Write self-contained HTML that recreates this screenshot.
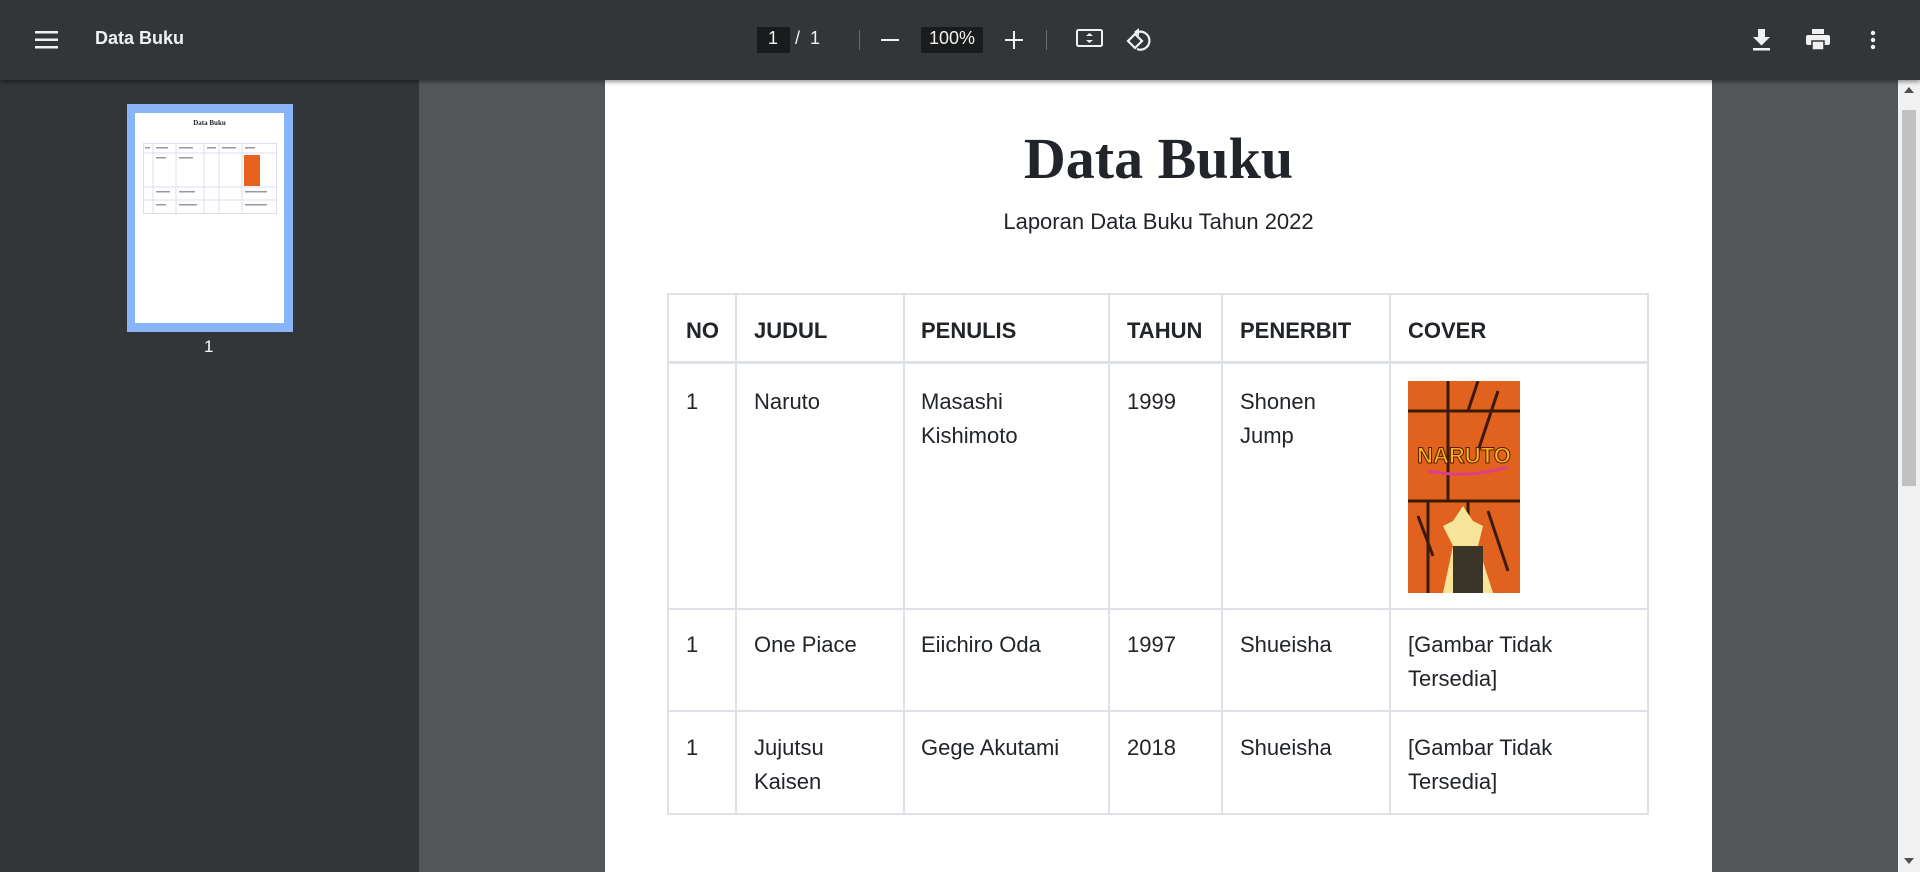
<!DOCTYPE html>
<html><head><meta charset="utf-8"><style>
*{margin:0;padding:0;box-sizing:border-box}
body{width:1920px;height:872px;overflow:hidden;background:#525659;font-family:"Liberation Sans",Arial,sans-serif;position:relative}
.tb{position:absolute;left:0;top:0;width:1920px;height:80px;background:#323639;box-shadow:0 2px 4px rgba(0,0,0,.4);z-index:5;color:#f1f1f1}
.side{position:absolute;left:0;top:80px;width:419px;height:792px;background:#323639}
.a{position:absolute}
.page{position:absolute;left:605px;top:80px;width:1107px;height:792px;background:#fff}
.sb{position:absolute;left:1898px;top:80px;width:22px;height:792px;background:#f1f1f1}
.c{position:absolute;font-size:22px;color:#212529;line-height:34px}
.h{font-weight:bold}
.vl{position:absolute;width:2px;background:#dee2e6}
.hl{position:absolute;height:2px;background:#dee2e6}
</style></head><body>
<div class="tb">
 <svg class="a" style="left:35px;top:30px" width="24" height="20"><rect x="0" y="1" width="23" height="2.5" fill="#f1f1f1"/><rect x="0" y="8.5" width="23" height="2.5" fill="#f1f1f1"/><rect x="0" y="16" width="23" height="2.5" fill="#f1f1f1"/></svg>
 <div class="a" style="left:95px;top:28px;font-size:18px;font-weight:bold">Data Buku</div>
 <div class="a" style="left:757px;top:27px;width:33px;height:26px;background:#191b1c"></div>
 <div class="a" style="left:768px;top:28px;font-size:18px">1</div>
 <div class="a" style="left:795px;top:28px;font-size:18px">/&nbsp;&nbsp;1</div>
 <div class="a" style="left:859px;top:30px;width:1px;height:20px;background:#6a6d70"></div>
 <div class="a" style="left:881px;top:39px;width:18px;height:2px;background:#f1f1f1"></div>
 <div class="a" style="left:921px;top:27px;width:62px;height:26px;background:#191b1c"></div>
 <div class="a" style="left:929px;top:28px;font-size:18px">100%</div>
 <div class="a" style="left:1005px;top:39px;width:18px;height:2px;background:#f1f1f1"></div>
 <div class="a" style="left:1013px;top:31px;width:2px;height:18px;background:#f1f1f1"></div>
 <div class="a" style="left:1046px;top:30px;width:1px;height:20px;background:#6a6d70"></div>
 <svg class="a" style="left:1076px;top:29px" width="28" height="19"><rect x="1" y="1" width="25" height="16" rx="1.5" fill="none" stroke="#f1f1f1" stroke-width="2"/><path d="M10 7l3.5-3 3.5 3zM10 11l3.5 3 3.5-3z" fill="#f1f1f1"/></svg>
 <svg class="a" style="left:1124px;top:26px" width="30" height="28"><path d="M4 15l7-7 7 7-7 7z" fill="none" stroke="#f1f1f1" stroke-width="2.2"/><path d="M14 6a9 9 0 1 1-1 17" fill="none" stroke="#f1f1f1" stroke-width="2.2"/><path d="M10 6l5-4v8z" fill="#f1f1f1"/></svg>
 <svg class="a" style="left:1752px;top:29px" width="20" height="22"><path d="M6 0h7v8h5l-8.5 8.5L1 8h5z" fill="#f1f1f1"/><rect x="1" y="19" width="17" height="2.5" fill="#f1f1f1"/></svg>
 <svg class="a" style="left:1806px;top:29px" width="24" height="22"><rect x="6" y="0" width="12" height="5" fill="#f1f1f1"/><rect x="0" y="6" width="24" height="10" rx="2" fill="#f1f1f1"/><rect x="6" y="12" width="12" height="9" fill="#f1f1f1" stroke="#323639" stroke-width="1.5"/></svg>
 <svg class="a" style="left:1870px;top:30px" width="6" height="20"><circle cx="3" cy="3" r="2.2" fill="#f1f1f1"/><circle cx="3" cy="10" r="2.2" fill="#f1f1f1"/><circle cx="3" cy="17" r="2.2" fill="#f1f1f1"/></svg>
</div>
<div class="side">
 <div class="a" style="left:127px;top:24px;width:166px;height:228px;background:#8ab4f8"></div>
 <div class="a" style="left:135px;top:33px;width:149px;height:210px;background:#fff">
  <div class="a" style="left:0;top:6px;width:149px;text-align:center;font:bold 7px 'Liberation Serif',serif;color:#222">Data Buku</div>
  <svg class="a" style="left:8px;top:30px" width="134" height="72"><g fill="none" stroke="#dde" stroke-width="1"><rect x=".5" y=".5" width="133" height="70"/><path d="M0 10h134M0 44h134M0 57h134M10 0v71M33 0v71M61 0v71M76 0v71M99 0v71"/></g><g fill="#999"><rect x="2" y="4" width="5" height="1.5"/><rect x="13" y="4" width="12" height="1.5"/><rect x="36" y="4" width="14" height="1.5"/><rect x="64" y="4" width="9" height="1.5"/><rect x="79" y="4" width="14" height="1.5"/><rect x="102" y="4" width="10" height="1.5"/><rect x="13" y="14" width="10" height="1.5"/><rect x="36" y="14" width="14" height="1.5"/><rect x="13" y="48" width="14" height="1.5"/><rect x="36" y="48" width="16" height="1.5"/><rect x="102" y="48" width="22" height="1.5"/><rect x="13" y="61" width="10" height="1.5"/><rect x="36" y="61" width="18" height="1.5"/><rect x="102" y="61" width="22" height="1.5"/></g><rect x="101" y="12" width="16" height="31" fill="#e8621e"/></svg>
 </div>
 <div class="a" style="left:204px;top:257px;color:#fff;font-size:17px">1</div>
</div>
<div class="page">
 <div class="a" style="left:0;top:46px;width:1107px;text-align:center;font:bold 58px 'Liberation Serif',serif;color:#212529;line-height:66px">Data Buku</div>
 <div class="a" style="left:0;top:129px;width:1107px;text-align:center;font-size:22px;color:#212529">Laporan Data Buku Tahun 2022</div>
</div>
<div class="hl" style="left:667px;top:293px;width:982px"></div>
<div class="hl" style="left:667px;top:361px;width:982px;height:3px"></div>
<div class="hl" style="left:667px;top:608px;width:982px"></div>
<div class="hl" style="left:667px;top:710px;width:982px"></div>
<div class="hl" style="left:667px;top:813px;width:982px"></div>
<div class="vl" style="left:667px;top:293px;height:522px"></div>
<div class="vl" style="left:735px;top:293px;height:522px"></div>
<div class="vl" style="left:903px;top:293px;height:522px"></div>
<div class="vl" style="left:1108px;top:293px;height:522px"></div>
<div class="vl" style="left:1221px;top:293px;height:522px"></div>
<div class="vl" style="left:1389px;top:293px;height:522px"></div>
<div class="vl" style="left:1647px;top:293px;height:522px"></div>
<div class="c h" style="left:686px;top:314px">NO</div>
<div class="c h" style="left:754px;top:314px">JUDUL</div>
<div class="c h" style="left:921px;top:314px">PENULIS</div>
<div class="c h" style="left:1127px;top:314px">TAHUN</div>
<div class="c h" style="left:1240px;top:314px">PENERBIT</div>
<div class="c h" style="left:1408px;top:314px">COVER</div>

<div class="c" style="left:686px;top:385px">1</div>
<div class="c" style="left:754px;top:385px">Naruto</div>
<div class="c" style="left:921px;top:385px">Masashi<br>Kishimoto</div>
<div class="c" style="left:1127px;top:385px">1999</div>
<div class="c" style="left:1240px;top:385px">Shonen<br>Jump</div>
<svg class="a" style="left:1408px;top:381px" width="112" height="212"><rect width="112" height="212" fill="#e0621e"/><path d="M0 30h112M0 120h112M40 0v120M20 120v92M60 120v92M70 0l-10 30M90 10l-20 60M10 135l15 40M80 130l20 60" stroke="#3a1a08" stroke-width="3"/><text x="56" y="82" text-anchor="middle" font-family="Liberation Sans" font-weight="bold" font-size="22" fill="#f5b21a" stroke="#5a1a00" stroke-width="1">NARUTO</text><path d="M20 90q40 8 80-4" stroke="#e03c8c" stroke-width="3" fill="none"/><path d="M45 140l10-15 10 15 10 5-5 20 15 47H35l10-47-10-20z" fill="#f5e49a"/><path d="M45 165h30v47H45z" fill="#3a3528"/></svg>

<div class="c" style="left:686px;top:628px">1</div>
<div class="c" style="left:754px;top:628px">One Piace</div>
<div class="c" style="left:921px;top:628px">Eiichiro Oda</div>
<div class="c" style="left:1127px;top:628px">1997</div>
<div class="c" style="left:1240px;top:628px">Shueisha</div>
<div class="c" style="left:1408px;top:628px">[Gambar Tidak<br>Tersedia]</div>

<div class="c" style="left:686px;top:731px">1</div>
<div class="c" style="left:754px;top:731px">Jujutsu<br>Kaisen</div>
<div class="c" style="left:921px;top:731px">Gege Akutami</div>
<div class="c" style="left:1127px;top:731px">2018</div>
<div class="c" style="left:1240px;top:731px">Shueisha</div>
<div class="c" style="left:1408px;top:731px">[Gambar Tidak<br>Tersedia]</div>

<div class="sb"><div class="a" style="left:4px;top:30px;width:14px;height:376px;background:#c1c1c1"></div>
<div class="a" style="left:6px;top:7px;width:0;height:0;border-left:5px solid transparent;border-right:5px solid transparent;border-bottom:6px solid #505050"></div>
<div class="a" style="left:6px;top:778px;width:0;height:0;border-left:5px solid transparent;border-right:5px solid transparent;border-top:6px solid #505050"></div></div>
</body></html>
